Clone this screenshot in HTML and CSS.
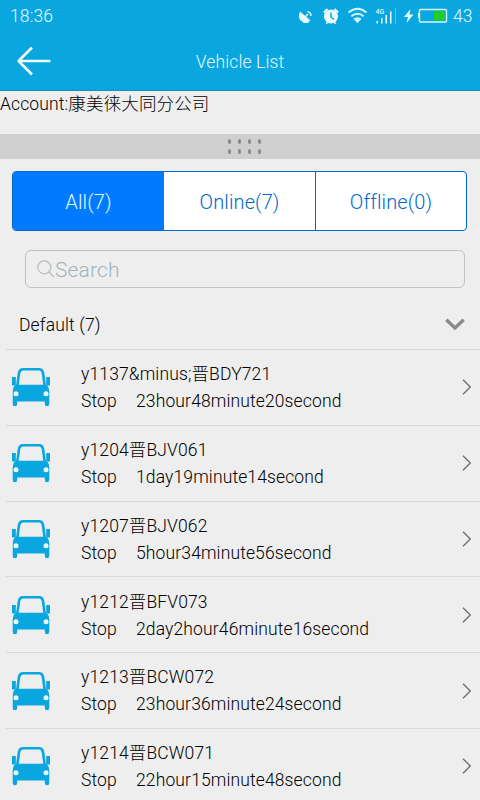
FILE: index.html
```html
<!DOCTYPE html>
<html lang="en">
<head>
  <meta charset="UTF-8"/>
  <meta name="viewport" content="width=device-width, initial-scale=1.0"/>
  <title>Vehicle List</title>
  <link rel="stylesheet" href="styles.css">
</head>
<body>
  <!-- Shared icons -->
  <svg class="icon-defs" width="0" height="0">
    <symbol id="car" viewBox="0 0 40 40">
      <path d="M6.3 19 L8 6 Q8.600 2.300 12 2.300 H28 Q31.400 2.300 32 6 L33.700 19" fill="none" stroke="currentColor" stroke-width="2.600"/>
      <path d="M1 10h3.800v8.500H1zM39 10h-3.800v8.500H39z" fill="currentColor"/>
      <path d="M5 17.800 H35 Q38.300 19.500 38.300 25 V36.800 Q38.300 39.300 36 39.300 Q33.800 39.300 33.800 36.800 V34.500 H6.200 V36.800 Q6.200 39.300 4 39.300 Q1.700 39.300 1.700 36.800 V25 Q1.700 19.500 5 17.800z" fill="currentColor"/>
      <circle cx="5" cy="26.800" r="2.500" fill="#eafaff"/>
      <circle cx="35" cy="26.800" r="2.500" fill="#eafaff"/>
    </symbol>
    <symbol id="chevron" viewBox="0 0 10 16">
      <path d="M1 .8 L8.3 8 L1 15.2" fill="none" stroke="currentColor" stroke-width="1.2"/>
    </symbol>
  </svg>

  <header>
    <div class="status-bar">
      <span class="clock">18:36</span>
      <svg class="status-icons" width="150" height="24" viewBox="298 4 150 24">
        <g fill="#e8fbff">
          <path d="M300 11.500 L310.500 20.500 Q308 23 304.500 22.500 Q300 21.500 299 17.500 Q298.500 14 300 11.500z"/>
          <path d="M303.500 20h2.500l3 3h-6z"/>
          <circle cx="331" cy="16.500" r="7"/>
          <path d="M323.800 12.500 L327.500 9M338.200 12.500 L334.500 9" stroke="#e8fbff" stroke-width="2"/>
          <path d="M325.500 24l1.500-2h8l1.500 2h-1.500l-1-1h-6l-1 1z"/>
          <path d="M357.500 23.200l-2.700-3.200q2.700-2 5.400 0z"/>
          <path d="M376.500 21h1.500v2.500h-1.500zM381 18h1.500v5.500H381zM385.500 15h1.500v8.500h-1.500zM390 11.500h1.500v12H390z"/>
          <path d="M410.500 9 L404 17 H408 L406.500 23 L413.500 14.500 H409.400z"/>
        </g>
        <g fill="none" stroke="#d5f5ff">
          <path d="M305 17l3-3M307.500 11.500q3.300 .8 3.500 4.500" stroke-width="1.600"/>
          <path d="M331 12.500v4.500l3 2.500" stroke="#0aa6df" stroke-width="1.500"/>
          <path d="M348.500 12.500q9-7.500 18 0M351.300 16.300q6.200-5.200 12.400 0M354 19.500q3.500-2.800 7 0" stroke-width="1.800"/>
          <path d="M395.500 8.500v15" stroke="#62c8ea"/>
          <rect x="419.500" y="9.500" width="27" height="12.500" rx="1" stroke-width="1.400"/>
          <path d="M418.500 13v5" stroke-width="1.200"/>
        </g>
        <rect x="434" y="11" width="10.500" height="9.500" fill="#1fcf1f"/>
        <text class="net-label" x="375.500" y="13.500">4G</text>
      </svg>
      <span class="battery">43</span>
    </div>
    <div class="title-bar">
      <svg class="back" width="36" height="30" viewBox="0 0 36 30" fill="none" stroke="#eefcff" stroke-width="2.6">
        <path d="M34.500 15 H3 M16 1.500 L2.500 15 L16 28.500" stroke-linejoin="bevel"/>
      </svg>
      <h1>Vehicle List</h1>
    </div>
  </header>

  <div class="account">Account:康美徕大同分公司</div>

  <div class="drag-handle">
    <i></i><i></i><i></i><i></i>
    <i></i><i></i><i></i><i></i>
  </div>

  <div class="tabs">
    <div class="tab active">All(7)</div>
    <div class="tab">Online(7)</div>
    <div class="tab">Offline(0)</div>
  </div>

  <div class="search">
    <svg width="18" height="18" viewBox="0 0 18 18" fill="none" stroke="#b9bcbc" stroke-width="1.200">
      <circle cx="7.300" cy="7.300" r="6.500"/>
      <path d="M12 12 L17 17"/>
    </svg>
    <span>Search</span>
  </div>

  <div class="group">
    <span>Default (7)</span>
    <svg width="20" height="13" viewBox="0 0 20 13" fill="none" stroke="#8a8a8a" stroke-width="3.400">
      <path d="M1.300 1.800 L10 10 L18.700 1.800"/>
    </svg>
  </div>

  <!-- Vehicles -->
  <ul class="vehicles">
    <li class="vehicle">
      <svg class="car"><use href="#car"/></svg>
      <div class="info">
        <div>y1137&amp;minus;晋BDY721</div>
        <div><span class="state">Stop</span>23hour48minute20second</div>
      </div>
      <svg class="chevron"><use href="#chevron"/></svg>
    </li>
    <li class="vehicle">
      <svg class="car"><use href="#car"/></svg>
      <div class="info">
        <div>y1204晋BJV061</div>
        <div><span class="state">Stop</span>1day19minute14second</div>
      </div>
      <svg class="chevron"><use href="#chevron"/></svg>
    </li>
    <li class="vehicle">
      <svg class="car"><use href="#car"/></svg>
      <div class="info">
        <div>y1207晋BJV062</div>
        <div><span class="state">Stop</span>5hour34minute56second</div>
      </div>
      <svg class="chevron"><use href="#chevron"/></svg>
    </li>
    <li class="vehicle">
      <svg class="car"><use href="#car"/></svg>
      <div class="info">
        <div>y1212晋BFV073</div>
        <div><span class="state">Stop</span>2day2hour46minute16second</div>
      </div>
      <svg class="chevron"><use href="#chevron"/></svg>
    </li>
    <li class="vehicle">
      <svg class="car"><use href="#car"/></svg>
      <div class="info">
        <div>y1213晋BCW072</div>
        <div><span class="state">Stop</span>23hour36minute24second</div>
      </div>
      <svg class="chevron"><use href="#chevron"/></svg>
    </li>
    <li class="vehicle">
      <svg class="car"><use href="#car"/></svg>
      <div class="info">
        <div>y1214晋BCW071</div>
        <div><span class="state">Stop</span>22hour15minute48second</div>
      </div>
      <svg class="chevron"><use href="#chevron"/></svg>
    </li>
  </ul>
</body>
</html>
```
FILE: styles.css
```css
:root {
  --header: #0aa6df;
  --primary: #007aff;
  --link: #0068c9;
  --bg: #eeeeee;
  --line: #d9d9d9;
}

* {
  box-sizing: border-box;
  margin: 0;
  padding: 0;
}

body {
  height: 800px;
  overflow: hidden;
  font-family: Roboto, "Noto Sans CJK SC", sans-serif;
  font-weight: 300;
  font-size: 17.5px;
  letter-spacing: 0.13px;
  color: #000;
  background: var(--bg);
}

.icon-defs {
  position: absolute;
}

header {
  height: 91px;
  background: var(--header);
  border-bottom: 1px solid #158fbd;
  color: #e2fbff;
}

.status-bar {
  display: flex;
  align-items: center;
  height: 32px;
  padding: 0 8px 0 10px;
}

.status-icons {
  margin-left: auto;
}

.battery {
  width: 19px;
  margin-left: 5px;
  letter-spacing: 0;
}

.net-label {
  font-size: 7px;
  font-weight: 500;
  fill: #d5f8ff;
}

.title-bar {
  display: grid;
  grid-template-columns: 60px 1fr 60px;
  align-items: center;
  height: 58px;
}

.back {
  margin-left: 16px;
}

h1 {
  padding-top: 1px;
  font-size: 17.5px;
  font-weight: 300;
  text-align: center;
}

.account {
  height: 43px;
  line-height: 26px;
}

.drag-handle {
  display: grid;
  grid-template-columns: repeat(4, 3px);
  gap: 5px 7.3px;
  place-content: center;
  height: 25px;
  padding-left: 9px;
  background: #cfcfcf;
}

.drag-handle i {
  width: 3px;
  height: 5px;
  border-radius: 50%;
  background: #858585;
}

.tabs {
  display: flex;
  height: 60px;
  margin: 12px 13px 0 12px;
  border: 1px solid var(--link);
  border-radius: 4px;
  background: #fff;
  overflow: hidden;
}

.tab {
  flex: 0 0 151px;
  line-height: 60px;
  text-align: center;
  font-size: 20px;
  color: var(--link);
}

.tab:nth-child(2) {
  flex: 1;
}

.tab:last-child {
  border-left: 1px solid var(--link);
}

.tab.active {
  background: var(--primary);
  color: #e2fbff;
}

.search {
  display: flex;
  align-items: center;
  height: 38px;
  margin: 19px 15px 0 25px;
  padding-left: 11px;
  border: 1px solid #bfc2c2;
  border-radius: 6px;
  font-size: 21px;
  color: #9fb3bc;
}

.search span {
  padding-top: 2px;
}

.group {
  display: flex;
  align-items: center;
  justify-content: space-between;
  height: 61px;
  padding: 12px 15px 0 19px;
}

.vehicles {
  list-style: none;
}

.vehicle {
  display: flex;
  align-items: center;
  height: 75.8px;
  margin-left: 6px;
  padding-right: 8px;
  border-top: 1px solid var(--line);
}

.car {
  width: 40px;
  height: 40px;
  margin-left: 5px;
  color: var(--header);
}

.info {
  flex: 1;
  margin-left: 30px;
  padding-top: 1.5px;
  line-height: 27px;
}

.state {
  display: inline-block;
  width: 55px;
}

.chevron {
  width: 10px;
  height: 16px;
  color: #666;
}
```
